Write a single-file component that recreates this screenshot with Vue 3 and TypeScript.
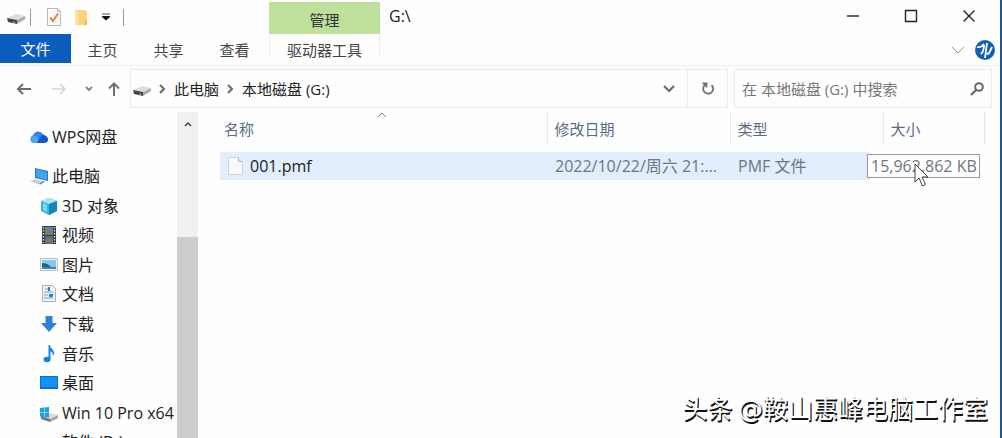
<script setup lang="ts">
import { ref } from 'vue'

interface Place {
  icon: string
  name: string
}

const places: Place[] = [
  { icon: 'cube', name: '3D 对象' },
  { icon: 'video', name: '视频' },
  { icon: 'picture', name: '图片' },
  { icon: 'doc', name: '文档' },
  { icon: 'download', name: '下载' },
  { icon: 'music', name: '音乐' },
  { icon: 'desktop', name: '桌面' },
  { icon: 'windrive', name: 'Win 10 Pro x64' },
  { icon: 'none', name: '软件 (D:)' },
]
const tabs = ['主页', '共享', '查看']
const query = ref('')
</script>

<template>
  <div class="window">
    <header class="titlebar">
      <div class="quick">
        <svg class="drive" viewBox="0 0 18 10" aria-hidden="true">
          <path d="M0 4 9 0l9 2-8 4z" fill="#dedede" /><path d="M0 4l10 2v4L1 8z" fill="#444" /><path d="M10 6l8-4v3l-8 5z" fill="#a9a9a9" /><path d="M6 7.500l2 .5v1l-2-.5z" fill="#8bdc9a" />
        </svg>
        <i class="bar"></i>
        <button class="q-props" aria-label="属性">
          <svg width="14" height="18" viewBox="0 0 14 18"><path d="M.5.5h10l3 3v14H.5z" fill="#fbf9fa" stroke="#b9b9bd" /><path d="M10.500.5v3h3" fill="none" stroke="#b9b9bd" /><path d="M3 9.500l3 3.500 5-7.500" fill="none" stroke="#e2854a" stroke-width="2" /></svg>
        </button>
        <button class="q-new" aria-label="新建文件夹">
          <svg width="12" height="17" viewBox="0 0 12 17"><path d="M0 1h9l3 1v14H0z" fill="#fbd57c" /><path d="M0 1l3 2v13H0z" fill="#fbe3a5" /><path d="M10 11h2v5h-3z" fill="#f1bd51" /></svg>
        </button>
        <button class="q-more" aria-label="自定义快速访问工具栏">
          <svg width="8" height="8" viewBox="0 0 8 8"><path d="M0 1h8" stroke="#555" /><path d="M0 3h8v1L4 7.500 0 4z" fill="#111" /></svg>
        </button>
        <i class="bar"></i>
      </div>
      <div class="context">管理</div>
      <h1 class="title">G:\</h1>
      <div class="controls">
        <button aria-label="最小化"><svg width="14" height="14" viewBox="0 0 14 14"><path d="M1 7h12" stroke="#222" stroke-width="1.400" /></svg></button>
        <button aria-label="最大化"><svg width="14" height="14" viewBox="0 0 14 14"><path d="M1.500 1.500h11v11h-11z" fill="none" stroke="#222" stroke-width="1.400" /></svg></button>
        <button aria-label="关闭"><svg width="14" height="14" viewBox="0 0 14 14"><path d="M1.500 1.500l11 11m0-11l-11 11" stroke="#222" stroke-width="1.400" /></svg></button>
      </div>
    </header>

    <nav class="ribbon" aria-label="功能区">
      <button class="file">文件</button>
      <button v-for="t in tabs" :key="t" class="tab">{{ t }}</button>
      <button class="tools">驱动器工具</button>
      <span class="grow"></span>
      <button class="expand" aria-label="展开功能区"><svg width="14" height="10" viewBox="0 0 14 10"><path d="M1 2l6 6 6-6" fill="none" stroke="#999" /></svg></button>
      <button class="help" aria-label="帮助">
        <svg width="20" height="20" viewBox="0 0 20 20"><circle cx="10" cy="10" r="10" fill="#1260b4" /><path d="M2 7q4 1 7-3M9 5q0 6-3 9M12 3l-2 15M17 7l-3 6q-1 2-2 0" fill="none" stroke="#fff" stroke-width="1.800" /></svg>
      </button>
    </nav>

    <div class="address-row">
      <button class="nav-btn" aria-label="后退"><svg width="14" height="12" viewBox="0 0 14 12"><path d="M6 1L1 6l5 5M1 6h13" fill="none" stroke="#6e6e6e" stroke-width="2" /></svg></button>
      <button class="nav-btn forward" aria-label="前进"><svg width="14" height="12" viewBox="0 0 14 12"><path d="M8 1l5 5-5 5M13 6H0" fill="none" stroke="#d6d6da" stroke-width="1.600" /></svg></button>
      <button class="nav-btn recent" aria-label="最近浏览的位置"><svg width="8" height="6" viewBox="0 0 8 6"><path d="M1 1l3 3 3-3" fill="none" stroke="#808080" stroke-width="1.800" /></svg></button>
      <button class="nav-btn up" aria-label="上移"><svg width="12" height="14" viewBox="0 0 12 14"><path d="M1 6.500l5-5 5 5M6 1v13" fill="none" stroke="#707070" stroke-width="2" /></svg></button>
      <div class="address">
        <svg class="drive" viewBox="0 0 18 10" aria-hidden="true">
          <path d="M0 4 9 0l9 2-8 4z" fill="#dedede" /><path d="M0 4l10 2v4L1 8z" fill="#444" /><path d="M10 6l8-4v3l-8 5z" fill="#a9a9a9" /><path d="M6 7.500l2 .5v1l-2-.5z" fill="#8bdc9a" />
        </svg>
        <svg class="sep" width="6" height="10" viewBox="0 0 6 10"><path d="M1 1l4 4-4 4" fill="none" stroke="#6a6a6a" stroke-width="2" /></svg>
        <button class="crumb">此电脑</button>
        <svg class="sep" width="6" height="10" viewBox="0 0 6 10"><path d="M1 1l4 4-4 4" fill="none" stroke="#6a6a6a" stroke-width="2" /></svg>
        <button class="crumb">本地磁盘 (G:)</button>
        <span class="grow"></span>
        <button class="drop" aria-label="以前的位置"><svg width="12" height="8" viewBox="0 0 12 8"><path d="M1 1l5 5 5-5" fill="none" stroke="#6a6a6a" stroke-width="2.200" /></svg></button>
        <button class="refresh" aria-label="刷新"><svg width="14" height="14" viewBox="0 0 14 14"><path d="M10.500 3a5 5 0 1 1-6-.5M1.500 1.500h4v4" fill="none" stroke="#707070" stroke-width="1.800" /></svg></button>
      </div>
      <label class="search">
        <input v-model="query" type="text" placeholder="在 本地磁盘 (G:) 中搜索" aria-label="搜索" />
        <svg width="14" height="14" viewBox="0 0 14 14" aria-hidden="true"><circle cx="9" cy="5" r="3.800" fill="none" stroke="#666" stroke-width="2" /><path d="M6.500 7.500L1 13" stroke="#666" stroke-width="2.200" /></svg>
      </label>
    </div>

    <main class="body">
      <aside class="sidebar">
        <a class="root cloud" href="#wps">
          <svg width="18" height="14" viewBox="0 0 18 14"><path d="M4 13a4 4 0 0 1-.5-7.800A5 5 0 0 1 12.500 4c3 1 5.500 3 5.500 5.500S16 13 14 13z" fill="#1d6fe0" /><path d="M3.500 5.200A5 5 0 0 1 12.500 4L8 9z" fill="#2f86ee" /><path d="M6 13l5-6q4-3 6.500 1 1.500 4-3.500 5z" fill="#1757c8" /><path d="M4 13q-5-1-3-5 2-3 5-2 2 1 3 3l-2 4z" fill="#4aa6f7" /></svg>
          <span>WPS网盘</span>
        </a>
        <a class="root" href="#pc">
          <svg width="18" height="17" viewBox="0 0 18 17"><path d="M5 0l13 3v10L5 10z" fill="#2477c4" /><path d="M6 1l11 3v8L6 9z" fill="#42a5ec" /><path d="M0 13l5-2 8 2.500-4 3z" fill="#c6ced6" /><path d="M9 16l4-3 2 .5-4 3z" fill="#7d8a96" /></svg>
          <span>此电脑</span>
        </a>
        <div class="places">
          <a v-for="p in places" :key="p.name" class="place" :href="'#' + p.icon">
            <svg width="18" height="18" viewBox="0 0 18 18" aria-hidden="true">
              <g v-if="p.icon === 'cube'"><path d="M1 4l8-3 8 3v10l-8 4-8-4z" fill="#35b5dc" /><path d="M1 4l8-3 8 3-8 3z" fill="#a5e6f5" /><path d="M9 7l8-3v10l-8 4z" fill="#1487b5" /><path d="M3 6l4 2v7l-4-2z" fill="#7fd9ef" /></g>
              <g v-else-if="p.icon === 'video'"><path d="M2 0h14v18H2z" fill="#3a3d45" /><path d="M5 1h8v8H5z" fill="#5a83b8" /><path d="M5 10h8v8H5z" fill="#496fa5" /><path d="M5 6l3-2 5 3v2H5zM5 15l4-3 4 2v2H5z" fill="#8c7a45" /><path d="M3.500 1v16M14.500 1v16" stroke="#d8d8d8" stroke-width="1.300" stroke-dasharray="1.500 1.500" /></g>
              <g v-else-if="p.icon === 'picture'"><path d="M.5 2.500h17v12H.5z" fill="#eef3f7" stroke="#b8c0c8" /><path d="M2 4h14v9H2z" fill="#85c7ef" /><path d="M2 7q5 0 8 3t6 1v2H2z" fill="#2a6277" /><path d="M2 11h14v2H2z" fill="#3c86b5" /></g>
              <g v-else-if="p.icon === 'doc'"><path d="M2.500.5h10l3 3v13h-13z" fill="#edf3f8" stroke="#a5b1bc" /><path d="M5 4h3M4 7h9M4 10h4M4 13h9" stroke="#6aa3cf" /><path d="M8 2h2v4H8zM9 9h4v3H9z" fill="#2d7fbe" /></g>
              <path v-else-if="p.icon === 'download'" d="M5.500 1h7v7H17l-8 9-8-9h4.500z" fill="#2f82d9" />
              <g v-else-if="p.icon === 'music'"><ellipse cx="7" cy="14.500" rx="3.500" ry="2.800" fill="#1583e0" /><path d="M8.500 14V0h1.500c0 4 4 4 4 8 0 2-1 3-1 3 0-4-2.500-4.500-2.500-4.500V14z" fill="#1583e0" /></g>
              <g v-else-if="p.icon === 'desktop'"><path d="M0 2h18v13H0z" fill="#0a6fce" /><path d="M1 3h16v10H1z" fill="#1491f7" /></g>
              <g v-else-if="p.icon === 'windrive'"><path d="M1 12l8-3 9 2-8 4z" fill="#dcdcdc" /><path d="M1 12l9 3v3l-9-3z" fill="#777" /><path d="M10 15l8-4v3l-8 4z" fill="#a5a5a5" /><path d="M0 4l4-.5V8H0zM4.500 3.500L9 3v5H4.500zM0 8.500h4V13l-4-.5zM4.500 8.500H9v5l-4.500-.5z" fill="#1ba1e2" /></g>
            </svg>
            <span>{{ p.name }}</span>
          </a>
        </div>
      </aside>
      <div class="scroll">
        <svg width="8" height="6" viewBox="0 0 8 6"><path d="M1 5l3-3 3 3" fill="none" stroke="#444" stroke-width="1.500" /></svg>
        <div class="thumb"></div>
      </div>
      <section class="files">
        <table>
          <colgroup><col /><col class="c-date" /><col class="c-type" /><col class="c-size" /><col class="c-end" /></colgroup>
          <thead>
            <tr>
              <th class="name">名称<svg class="sort" width="10" height="6" viewBox="0 0 10 6"><path d="M1 5l4-4 4 4" fill="none" stroke="#888" /></svg></th>
              <th>修改日期</th>
              <th>类型</th>
              <th>大小</th>
              <th></th>
            </tr>
          </thead>
          <tbody>
            <tr>
              <td class="name"><div class="file-name"><svg width="15" height="18" viewBox="0 0 15 18"><path d="M.5.5h10l4 4v13H.5z" fill="#f8f8f9" stroke="#d0d2d6" /><path d="M10.500.5v4h4" fill="#e9e9ec" stroke="#b5b7bc" /></svg>001.pmf</div></td>
              <td>2022/10/22/周六 21:...</td>
              <td>PMF 文件</td>
              <td class="size">
                <div class="tip">15,962,862 KB
                  <svg class="cursor" width="16" height="24" viewBox="0 0 16 24"><path d="M1 1v18l4-4 3.500 8 3-1.500L8 14h6z" fill="#fff" stroke="#444" /></svg>
                </div>
              </td>
              <td class="blank"></td>
            </tr>
          </tbody>
        </table>
      </section>
    </main>
    <div class="watermark">头条 <span class="at">@</span>鞍山惠峰电脑工作室</div>
  </div>
</template>

<style>
body {
  margin: 0;
}
</style>

<style scoped>
.window {
  position: relative;
  box-sizing: border-box;
  height: 100vh;
  overflow: hidden;
  display: flex;
  flex-direction: column;
  background: #fefefe;
  border-right: 2px solid #1c56a8;
  color: #222;
  font: 15px/20px 'Open Sans', 'Noto Sans CJK SC', sans-serif;
}
button {
  font: inherit;
  color: inherit;
  background: none;
  border: 0;
  padding: 0;
  display: flex;
  align-items: center;
  justify-content: center;
}
a {
  color: inherit;
  text-decoration: none;
}
svg {
  display: block;
  flex: none;
}
.grow {
  flex: 1;
}
.titlebar {
  display: flex;
  height: 34px;
  flex: none;
}
.quick {
  box-sizing: border-box;
  width: 269px;
  display: flex;
  align-items: center;
  padding-left: 7px;
}
.drive {
  width: 18px;
  height: 10px;
  margin-top: 4px;
}
.bar {
  width: 1px;
  height: 17px;
  margin: 0 16px 0 5px;
  background: #999;
}
.q-new {
  margin: 0 15px 0 14px;
}
.q-more {
  margin-right: 8px;
}
.context {
  box-sizing: border-box;
  width: 111px;
  margin-top: 2px;
  padding-top: 8px;
  background: #bfe09a;
  color: #333;
  text-align: center;
}
.title {
  margin: 0 0 0 9px;
  font-size: 16px;
  font-weight: 400;
  line-height: 32px;
  flex: 1;
}
.controls {
  display: flex;
  padding: 0 2px 2px 0;
}
.controls button {
  width: 58px;
}
.ribbon {
  display: flex;
  height: 31px;
  flex: none;
  border-bottom: 1px solid #f0f0f2;
  color: #444;
}
.file {
  width: 71px;
  height: 29px;
  background: #0a5cbd;
  color: #fff;
}
.tab {
  width: 66px;
  height: 31px;
  padding-right: 3px;
}
.tools {
  box-sizing: border-box;
  width: 111px;
  height: 22px;
  padding-top: 9px;
  border: solid #ececef;
  border-width: 0 1px;
}
.expand {
  margin-right: 10px;
}
.help {
  margin-right: 5px;
}
.address-row {
  display: flex;
  align-items: stretch;
  height: 42px;
  flex: none;
  padding: 3px 8px 0 17px;
  box-sizing: border-box;
  margin-bottom: 2px;
}
.nav-btn {
  width: 14px;
  margin-right: 21px;
}
.nav-btn.recent {
  width: 8px;
  margin: 0 15px 0 -2px;
}
.nav-btn.up {
  width: 12px;
  margin-right: 10px;
}
.address {
  flex: 1;
  display: flex;
  align-items: center;
  padding-left: 2px;
  border: 1px solid #ebebee;
}
.sep {
  margin: 0 9px 0 8px;
}
.drop {
  margin-right: 12px;
}
.refresh {
  width: 40px;
  align-self: stretch;
  border-left: 1px solid #ebebee;
}
.search {
  width: 242px;
  flex: none;
  display: flex;
  align-items: center;
  margin-left: 6px;
  padding: 0 7px;
  border: 1px solid #ebebee;
}
.search input {
  flex: 1;
  min-width: 0;
  font: inherit;
  padding: 0;
  border: 0;
  outline: 0;
  background: none;
}
.search input::placeholder {
  color: #777;
  opacity: 1;
}
.body {
  flex: 1;
  min-height: 0;
  display: flex;
}
.sidebar {
  width: 177px;
  flex: none;
  overflow: hidden;
  white-space: nowrap;
  font-size: 16px;
}
.root {
  display: flex;
  align-items: center;
  gap: 4px;
  height: 30px;
  padding-left: 30px;
}
.root.cloud {
  padding-top: 12px;
  margin-bottom: 9px;
}
.places {
  display: grid;
  grid-auto-rows: 1fr;
  height: 266px;
}
.place {
  display: flex;
  align-items: center;
  gap: 4px;
  padding-left: 40px;
}
.scroll {
  width: 21px;
  flex: none;
  margin-top: 2px;
  display: flex;
  flex-direction: column;
  align-items: center;
  background: #f0f0f2;
  padding-top: 9px;
  box-sizing: border-box;
}
.thumb {
  align-self: stretch;
  flex: 1;
  margin-top: 110px;
  background: #cdcdcd;
}
.files {
  flex: 1;
  padding: 2px 0 0 22px;
}
table {
  width: 100%;
  border-collapse: collapse;
  table-layout: fixed;
}
.c-date {
  width: 183px;
}
.c-type {
  width: 153px;
}
.c-size {
  width: 101px;
}
.c-end {
  width: 16px;
}
th {
  height: 33px;
  padding: 0 0 0 7px;
  font-weight: 400;
  text-align: left;
  color: #5c6a86;
  border-right: 1px solid #e8e8ec;
}
th:last-child {
  border: 0;
}
th.name {
  position: relative;
  padding-left: 4px;
}
.sort {
  position: absolute;
  left: 48%;
  top: 0;
}
tbody::before {
  content: '';
  display: block;
  height: 7px;
}
td {
  height: 28px;
  padding: 0 0 0 8px;
  font-size: 16px;
  color: #6f7681;
  background: #e2eefd;
  white-space: nowrap;
}
td.name {
  color: #1c1c1c;
}
.file-name {
  display: flex;
  align-items: center;
  gap: 7px;
}
td.size,
td.blank {
  padding: 0;
  background: none;
}
.tip {
  position: relative;
  box-sizing: border-box;
  height: 24px;
  margin: 0 4px 0 -16px;
  padding-left: 3px;
  line-height: 22px;
  border: 1px solid #999;
  background: #fff;
  box-shadow: 3px -3px 0 #fefefe, 3px 3px 0 #fefefe;
}
.cursor {
  position: absolute;
  left: 46px;
  top: 8px;
}
.watermark {
  position: absolute;
  right: 12px;
  bottom: 10px;
  font-family: 'Noto Sans CJK SC', sans-serif;
  font-size: 25px;
  line-height: 36px;
  color: #fff;
  text-shadow: 1px 1px 0 #111, 1px 2px 0 #111;
}
.at {
  font-family: 'DejaVu Sans', sans-serif;
}
</style>
